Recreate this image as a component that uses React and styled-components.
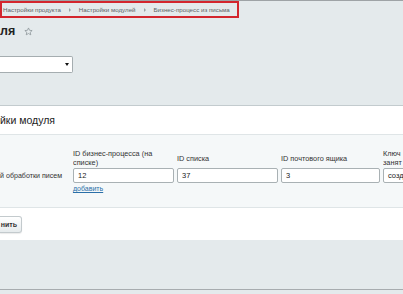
import React from 'react';
import styled, { createGlobalStyle } from 'styled-components';

const Global = createGlobalStyle`
	html, body {
		margin: 0;
		padding: 0;
		background: #e4eaec;
	}
	body {
		font-family: "Liberation Sans", Arial, sans-serif;
	}
`;

const Page = styled.div`
	width: 403px;
	height: 288px;
	background: #e4eaec;
	border-top: 1px solid #9ea3a6;
	border-bottom: 1px solid #a7acaf;
	overflow: hidden;
`;

const Crumbs = styled.div`
	display: flex;
	align-items: center;
	width: fit-content;
	height: 13px;
	padding: 0 7px 0 1px;
	border: 2px solid #d3262e;
	font-size: 6.2px;
	color: #5c6366;
	white-space: nowrap;
`;

const Arrow = styled.span`
	display: inline-block;
	width: 0;
	height: 0;
	margin: 0 8px;
	border-top: 2px solid transparent;
	border-bottom: 2px solid transparent;
	border-left: 2px solid #9aa2a5;
`;

const TitleRow = styled.div`
	display: flex;
	align-items: center;
	gap: 9px;
	margin-top: 4px;
	height: 18px;
`;

const Title = styled.h1`
	margin: 0;
	font-size: 12.5px;
	font-weight: 700;
	color: #222;
`;

const Star = styled.svg`
	width: 9px;
	height: 9px;
`;

const Select = styled.div`
	display: flex;
	justify-content: flex-end;
	align-items: center;
	margin-top: 16px;
	width: 69px;
	height: 15px;
	padding-right: 3px;
	background: #fff;
	border: 1px solid #a5adb0;
	border-left: none;
	border-radius: 0 2px 2px 0;
`;

const Caret = styled.span`
	width: 0;
	height: 0;
	border-left: 2px solid transparent;
	border-right: 2px solid transparent;
	border-top: 3px solid #111;
`;

const Card = styled.div`
	margin-top: 32px;
	background: #fff;
	border-top: 1px solid #c3cbce;
`;

const CardHead = styled.div`
	height: 28px;
	display: flex;
	align-items: center;
	font-size: 10.5px;
	color: #222;
	border-bottom: 1px solid #dfe5e7;
`;

const Fields = styled.div`
	display: grid;
	grid-template-columns: 73px 104px 104px 102px 20px;
	grid-template-rows: 20px 15px auto;
	padding-top: 13px;
	height: 59px;
	background: #f5f8f9;
	border-bottom: 1px solid #dfe5e7;
	font-size: 7.3px;
	color: #333;
`;

const Label = styled.div`
	align-self: center;
	line-height: 9px;
	white-space: nowrap;
	overflow: hidden;
	padding-right: 4px;
`;

const RowLabel = styled.div`
	grid-row: 2;
	align-self: center;
	white-space: nowrap;
	font-size: 7.1px;
`;

const Input = styled.div`
	grid-row: 2;
	height: 13px;
	margin-right: ${p => p.$last ? '-4px' : '3px'};
	display: flex;
	align-items: center;
	padding-left: 4px;
	background: #fff;
	border: 1px solid #a9b1b4;
	border-radius: 2px;
	font-size: 7.5px;
	color: #222;
	overflow: hidden;
	white-space: nowrap;
`;

const Add = styled.a`
	grid-row: 3;
	grid-column: 2;
	margin-top: 2px;
	font-size: 7px;
	color: #2a6fa8;
	text-decoration: underline;
`;

const Footer = styled.div`
	height: 32px;
	display: flex;
	align-items: center;
`;

const Button = styled.button`
	height: 17px;
	width: 22px;
	padding: 0 4px 0 0;
	border: 1px solid #c3cacd;
	border-left: none;
	border-radius: 0 3px 3px 0;
	background: linear-gradient(#ffffff, #e6ebed);
	font-family: inherit;
	font-size: 7px;
	font-weight: 700;
	color: #333;
	text-align: right;
	box-shadow: 0 1px 1px rgba(0,0,0,0.08);
`;

export default function App() {
	return (
		<Page>
			<Global />
			<Crumbs>
				Настройки продукта<Arrow />Настройки модулей<Arrow />Бизнес-процесс из письма
			</Crumbs>
			<TitleRow>
				<Title>ля</Title>
				<Star viewBox="0 0 24 24">
					<path d="M12 2.5l2.9 6.3 6.8.7-5.1 4.6 1.5 6.8L12 17.4l-6.1 3.5 1.5-6.8-5.1-4.6 6.8-.7z" fill="none" stroke="#8a9397" strokeWidth="2" strokeLinejoin="round" />
				</Star>
			</TitleRow>
			<Select><Caret /></Select>
			<Card>
				<CardHead>йки модуля</CardHead>
				<Fields>
					<div />
					<Label>ID бизнес-процесса (на<br />списке)</Label>
					<Label>ID списка</Label>
					<Label>ID почтового ящика</Label>
					<Label>Ключ<br />занят</Label>
					<RowLabel>й обработки писем</RowLabel>
					<Input>12</Input>
					<Input>37</Input>
					<Input>3</Input>
					<Input $last>созд</Input>
					<Add href="#">добавить</Add>
				</Fields>
				<Footer>
					<Button>нить</Button>
				</Footer>
			</Card>
		</Page>
	);
}
